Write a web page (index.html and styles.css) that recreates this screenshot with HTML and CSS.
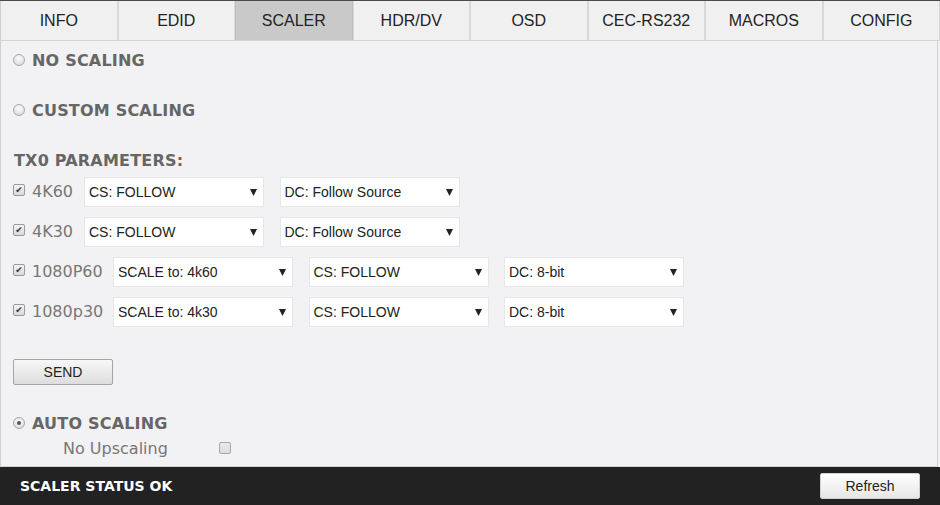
FILE: index.html
```html
<!DOCTYPE html>
<html>
<head>
<meta charset="utf-8">
<title>Scaler</title>
<link rel="stylesheet" href="styles.css">
</head>
<body>
<div class="app">
  <nav class="tabs">
    <div class="tab">INFO</div>
    <div class="tab">EDID</div>
    <div class="tab active">SCALER</div>
    <div class="tab">HDR/DV</div>
    <div class="tab">OSD</div>
    <div class="tab">CEC-RS232</div>
    <div class="tab">MACROS</div>
    <div class="tab">CONFIG</div>
  </nav>
  <main class="content">
    <div class="heading h-first"><span class="radio"></span>NO SCALING</div>
    <div class="heading h-next"><span class="radio"></span>CUSTOM SCALING</div>
    <div class="heading h-next plain">TX0 PARAMETERS:</div>

    <div class="param-row first-row">
      <span class="chk">&#10004;</span><span class="plabel">4K60</span>
      <div class="select"><span>CS: FOLLOW</span><svg class="arrow" viewBox="0 0 7 7"><path d="M0 0H7L3.5 7Z"/></svg></div>
      <div class="select"><span>DC: Follow Source</span><svg class="arrow" viewBox="0 0 7 7"><path d="M0 0H7L3.5 7Z"/></svg></div>
    </div>
    <div class="param-row">
      <span class="chk">&#10004;</span><span class="plabel">4K30</span>
      <div class="select"><span>CS: FOLLOW</span><svg class="arrow" viewBox="0 0 7 7"><path d="M0 0H7L3.5 7Z"/></svg></div>
      <div class="select"><span>DC: Follow Source</span><svg class="arrow" viewBox="0 0 7 7"><path d="M0 0H7L3.5 7Z"/></svg></div>
    </div>
    <div class="param-row">
      <span class="chk">&#10004;</span><span class="plabel long">1080P60</span>
      <div class="select"><span>SCALE to: 4k60</span><svg class="arrow" viewBox="0 0 7 7"><path d="M0 0H7L3.5 7Z"/></svg></div>
      <div class="select"><span>CS: FOLLOW</span><svg class="arrow" viewBox="0 0 7 7"><path d="M0 0H7L3.5 7Z"/></svg></div>
      <div class="select"><span>DC: 8-bit</span><svg class="arrow" viewBox="0 0 7 7"><path d="M0 0H7L3.5 7Z"/></svg></div>
    </div>
    <div class="param-row">
      <span class="chk">&#10004;</span><span class="plabel long">1080p30</span>
      <div class="select"><span>SCALE to: 4k30</span><svg class="arrow" viewBox="0 0 7 7"><path d="M0 0H7L3.5 7Z"/></svg></div>
      <div class="select"><span>CS: FOLLOW</span><svg class="arrow" viewBox="0 0 7 7"><path d="M0 0H7L3.5 7Z"/></svg></div>
      <div class="select"><span>DC: 8-bit</span><svg class="arrow" viewBox="0 0 7 7"><path d="M0 0H7L3.5 7Z"/></svg></div>
    </div>

    <button class="btn send">SEND</button>

    <div class="heading h-auto"><span class="radio checked"></span>AUTO SCALING</div>
    <div class="upscale-row">
      <span class="uplabel">No Upscaling</span>
      <span class="chk empty"></span>
    </div>
  </main>
  <footer class="status">
    <span class="status-text">SCALER STATUS OK</span>
    <button class="btn refresh">Refresh</button>
  </footer>
</div>
</body>
</html>
```

FILE: styles.css
```css
html, body {
  margin: 0;
  padding: 0;
  background: #f2f2f4;
}
.app {
  width: 940px;
  height: 505px;
  display: flex;
  flex-direction: column;
  overflow: hidden;
}
.tabs {
  display: flex;
  border-top: 1px solid #4a4a4a;
  border-bottom: 1px solid #d6d6d6;
  background: #f0f0f0;
  box-sizing: border-box;
  flex: none;
  height: 41px;
}
.tab {
  flex: 1 1 0;
  display: flex;
  align-items: center;
  justify-content: center;
  font-family: "Liberation Sans", Arial, sans-serif;
  font-size: 16px;
  color: #222;
  background: #f0f0f0;
  border-left: 1px solid #d8d8d8;
  border-right: 1px solid #d8d8d8;
  padding-top: 1px;
}
.tab:first-child { border-left-color: #cfcfcf; }
.tab.active {
  background: #c9c9c9;
  border-left-color: #bdbdbd;
  border-right-color: #bdbdbd;
}
.content {
  flex: 1 1 auto;
  width: 938px;
  box-sizing: border-box;
  border-left: 1px solid #cfcfcf;
  border-right: 1px solid #cfcfcf;
  border-bottom: 1px solid #d0d0d0;
  background: #f2f2f4;
  padding-left: 12px;
}
.heading {
  display: flex;
  align-items: center;
  height: 20px;
  font-family: "DejaVu Sans", Verdana, sans-serif;
  font-weight: bold;
  font-size: 16px;
  letter-spacing: 0.2px;
  color: #666;
}
.heading.plain { padding-left: 1px; }
.h-first { margin-top: 9px; }
.h-next { margin-top: 30px; }
.h-auto { margin-top: 28px; }
.radio {
  width: 10px;
  height: 10px;
  border: 1px solid #a8a8a8;
  border-radius: 50%;
  background: radial-gradient(circle at 50% 35%, #fbfbfb, #d4d4d4);
  margin-right: 7px;
  flex: none;
  position: relative;
}
.radio.checked::after {
  content: "";
  position: absolute;
  left: 3px;
  top: 3px;
  width: 4px;
  height: 4px;
  border-radius: 50%;
  background: #555;
}
.param-row {
  display: flex;
  align-items: center;
  height: 30px;
  margin-top: 10px;
}
.param-row.first-row { margin-top: 7px; }
.chk {
  width: 10px;
  height: 10px;
  border: 1px solid #9a9a9a;
  border-radius: 2px;
  background: linear-gradient(#f4f4f4, #d9d9d9);
  margin-right: 7px;
  flex: none;
  display: flex;
  align-items: center;
  justify-content: center;
  font-family: "DejaVu Sans", sans-serif;
  font-size: 9px;
  line-height: 1;
  color: #333;
  margin-top: -4px;
}
.chk.empty {
  background: linear-gradient(#e9e9e9, #dcdcdc);
  border-color: #a6a6a6;
  margin-top: 0;
}
.plabel {
  font-family: "DejaVu Sans", Verdana, sans-serif;
  font-size: 16px;
  color: #777;
  width: 52px;
  flex: none;
  margin-top: -2px;
}
.plabel.long { width: 81px; }
.select {
  width: 180px;
  height: 30px;
  box-sizing: border-box;
  background: #fff;
  border: 1px solid #e6e6e6;
  display: flex;
  align-items: center;
  justify-content: space-between;
  padding: 0 6px 0 4px;
  font-family: "Liberation Sans", Arial, sans-serif;
  font-size: 14px;
  color: #222;
  margin-right: 15.5px;
}
.arrow {
  width: 7px;
  height: 7px;
  fill: #222;
}
.btn {
  font-family: "Liberation Sans", Arial, sans-serif;
  font-size: 14px;
  color: #222;
  border: 1px solid #a5a5a5;
  border-radius: 2px;
  background: linear-gradient(#f7f7f7, #dddddd);
  width: 100px;
  height: 26px;
  padding: 0;
}
.send {
  display: block;
  margin-top: 32px;
  margin-left: 0;
}
.upscale-row {
  display: flex;
  align-items: center;
  height: 20px;
  margin-top: 5px;
  padding-left: 50px;
}
.uplabel {
  font-family: "DejaVu Sans", Verdana, sans-serif;
  font-size: 16px;
  color: #777;
  width: 156px;
}
.status {
  flex: none;
  height: 38px;
  background: #222;
  display: flex;
  align-items: center;
  justify-content: space-between;
  padding: 0 20px;
}
.status-text {
  font-family: "DejaVu Sans", Verdana, sans-serif;
  font-weight: bold;
  font-size: 14px;
  color: #fff;
}
.refresh {
  border-color: #d0d0d0;
  background: linear-gradient(#ffffff, #e6e6e6);
  margin-top: 0;
}
```
